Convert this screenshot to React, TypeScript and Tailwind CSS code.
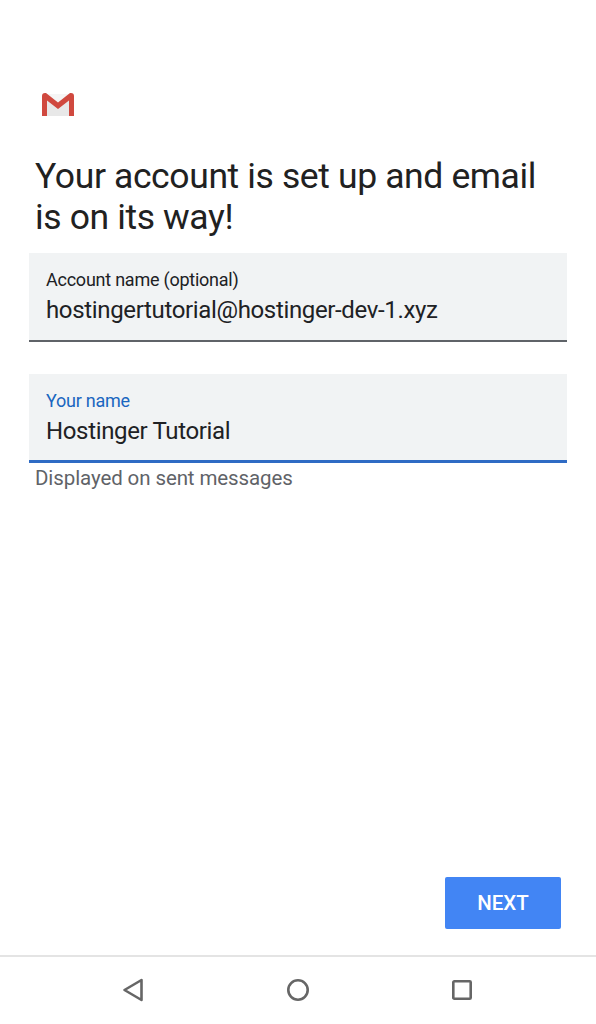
export default function App() {
  const font = { fontFamily: "Roboto, sans-serif" };
  return (
    <div style={font} className="w-[596px] h-[1024px] bg-white flex flex-col overflow-hidden">
      <div className="h-[929px] flex flex-col shrink-0">
        <div className="pl-[41px] pt-[92px] h-[156px] shrink-0">
          <svg width="34" height="25" viewBox="0 0 34 25">
            <path d="M3 2 L31 2 L31 24 L3 24 Z" fill="#e8e8e8" />
            <path d="M5 2 L17 12 L29 2 Z" fill="#f5f5f5" />
            <path d="M1 4 Q1 1 4 1 L5 1 L17 10.5 L29 1 L30 1 Q33 1 33 4 L33 24 L28 24 L28 8.5 L17 17 L6 8.5 L6 24 L1 24 Z" fill="#d0493f" />
          </svg>
        </div>
        <h1 className="pl-[35px] text-[35.5px] leading-[41px] text-[#212121] font-normal m-0 h-[97px] shrink-0 tracking-[-0.375px]">
          Your account is set up and email<br />is on its way!
        </h1>
        <div className="mx-[29px] h-[89px] bg-[#f1f3f4] border-b-[2px] border-[#5f6368] pl-[17px] pt-[16px] shrink-0">
          <div className="text-[18px] leading-[22px] text-[#202124] tracking-[-0.24px]">Account name (optional)</div>
          <div className="text-[24px] leading-[30px] mt-[4px] text-[#202124] tracking-[-0.35px]">hostingertutorial@hostinger-dev-1.xyz</div>
        </div>
        <div className="mx-[29px] mt-[32px] h-[89px] bg-[#f1f3f4] border-b-[3px] border-[#2f6bc4] pl-[17px] pt-[16px] shrink-0">
          <div className="text-[18px] leading-[22px] text-[#1a66c0] tracking-[-0.24px]">Your name</div>
          <div className="text-[24px] leading-[30px] mt-[4px] text-[#202124] tracking-[-0.35px]">Hostinger Tutorial</div>
        </div>
        <div className="pl-[35px] pt-[2px] text-[20.5px] leading-[26px] text-[#5f6368] tracking-[-0.1px]">Displayed on sent messages</div>
        <div className="mt-auto flex justify-end pr-[35px]">
          <button className="w-[116px] h-[52px] bg-[#4285f4] rounded-[2px] text-white text-[20.5px] font-medium">NEXT</button>
        </div>
      </div>
      <div className="mt-[26px] border-t-[2px] border-[#e4e4e4] flex-1">
        <div className="flex items-center h-[65px] pl-[122px] gap-[142px]">
          <svg width="22" height="24" viewBox="0 0 22 24" className="shrink-0">
            <path d="M19.5 2 L19.5 22 L2.5 12 Z" fill="none" stroke="#666" strokeWidth="2.6" strokeLinejoin="round" />
          </svg>
          <svg width="24" height="24" viewBox="0 0 24 24" className="shrink-0">
            <circle cx="12" cy="12" r="9.7" fill="none" stroke="#666" strokeWidth="2.6" />
          </svg>
          <svg width="20" height="20" viewBox="0 0 20 20" className="shrink-0">
            <rect x="1.3" y="1.3" width="17.4" height="17.4" rx="1" fill="none" stroke="#666" strokeWidth="2.6" />
          </svg>
        </div>
      </div>
    </div>
  );
}
